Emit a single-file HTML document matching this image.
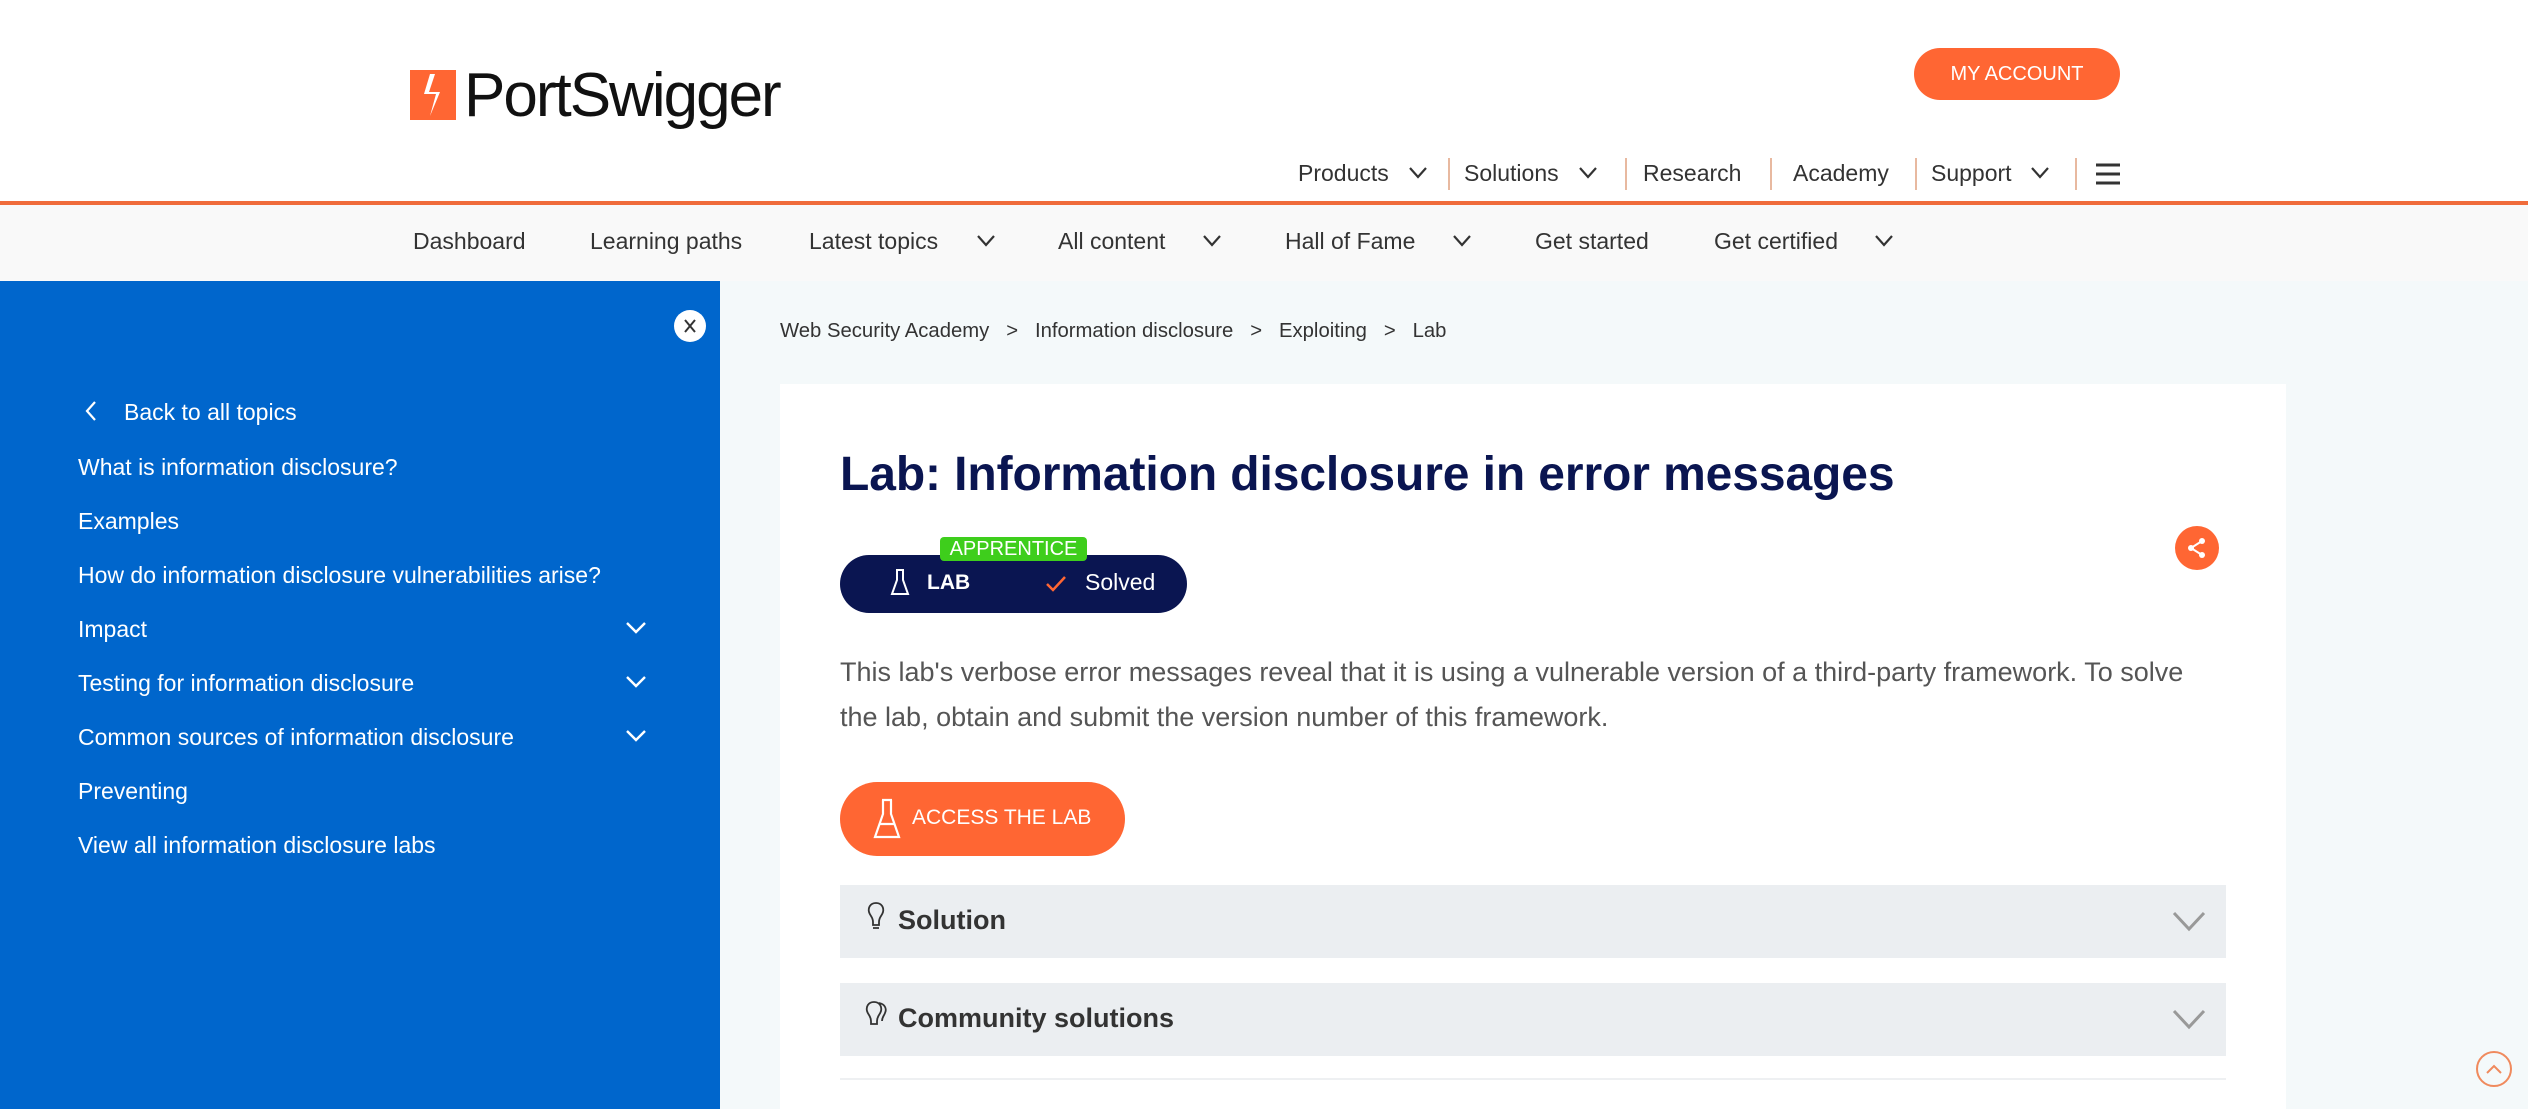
<!DOCTYPE html>
<html><head><meta charset="utf-8"><style>
*{margin:0;padding:0;box-sizing:border-box}
body{width:2528px;height:1109px;overflow:hidden;background:#fff;font-family:"Liberation Sans",Arial,sans-serif;position:relative}
.a{position:absolute;white-space:nowrap}
.nav{font-size:23px;color:#333;top:160px}
.sep{position:absolute;top:158px;width:2px;height:32px;background:#e8b9a0}
.sn{font-size:23px;color:#333;top:228px}
.side{font-size:23px;color:#fff}
.chev{position:absolute}
</style></head><body>
<div class="a" style="left:410px;top:70px;width:46px;height:50px;background:#ff6633"></div>
<svg class="a" style="left:410px;top:70px" width="46" height="50" viewBox="0 0 46 50"><path d="M20 4 L14 24 L26 24 L20 46 L30 22 L19 22 L25 4 Z" fill="#fff"/></svg>
<div class="a" style="left:464px;top:60px;font-size:62px;color:#111;letter-spacing:-2px;font-weight:500">PortSwigger</div>
<div class="a" style="left:1914px;top:48px;width:206px;height:52px;border-radius:26px;background:#ff6633;color:#fff;font-size:20px;line-height:52px;text-align:center">MY ACCOUNT</div>
<div class="a nav" style="left:1298px">Products</div>
<svg class="chev" style="left:1408px;top:166px" width="20" height="14"><path d="M2 2 L10 11 L18 2" stroke="#333" stroke-width="2.2" fill="none"/></svg>
<div class="sep" style="left:1448px"></div>
<div class="a nav" style="left:1464px">Solutions</div>
<svg class="chev" style="left:1578px;top:166px" width="20" height="14"><path d="M2 2 L10 11 L18 2" stroke="#333" stroke-width="2.2" fill="none"/></svg>
<div class="sep" style="left:1625px"></div>
<div class="a nav" style="left:1643px">Research</div>
<div class="sep" style="left:1770px"></div>
<div class="a nav" style="left:1793px">Academy</div>
<div class="sep" style="left:1915px"></div>
<div class="a nav" style="left:1931px">Support</div>
<svg class="chev" style="left:2030px;top:166px" width="20" height="14"><path d="M2 2 L10 11 L18 2" stroke="#333" stroke-width="2.2" fill="none"/></svg>
<div class="sep" style="left:2075px"></div>
<svg class="a" style="left:2096px;top:163px" width="24" height="22"><path d="M0 2H24M0 11H24M0 20H24" stroke="#333" stroke-width="3"/></svg>
<div class="a" style="left:0;top:201px;width:2528px;height:4px;background:#f06c3b"></div>
<div class="a" style="left:0;top:205px;width:2528px;height:76px;background:#f9f9f9"></div>
<div class="a sn" style="left:413px">Dashboard</div>
<div class="a sn" style="left:590px">Learning paths</div>
<div class="a sn" style="left:809px">Latest topics</div>
<svg class="chev" style="left:976px;top:234px" width="20" height="14"><path d="M2 2 L10 11 L18 2" stroke="#333" stroke-width="2.2" fill="none"/></svg>
<div class="a sn" style="left:1058px">All content</div>
<svg class="chev" style="left:1202px;top:234px" width="20" height="14"><path d="M2 2 L10 11 L18 2" stroke="#333" stroke-width="2.2" fill="none"/></svg>
<div class="a sn" style="left:1285px">Hall of Fame</div>
<svg class="chev" style="left:1452px;top:234px" width="20" height="14"><path d="M2 2 L10 11 L18 2" stroke="#333" stroke-width="2.2" fill="none"/></svg>
<div class="a sn" style="left:1535px">Get started</div>
<div class="a sn" style="left:1714px">Get certified</div>
<svg class="chev" style="left:1874px;top:234px" width="20" height="14"><path d="M2 2 L10 11 L18 2" stroke="#333" stroke-width="2.2" fill="none"/></svg>
<div class="a" style="left:0;top:281px;width:720px;height:828px;background:#0066cc"></div>
<div class="a" style="left:720px;top:281px;width:1808px;height:828px;background:#f4f9fa"></div>
<div class="a" style="left:674px;top:310px;width:32px;height:32px;border-radius:50%;background:#fff"></div>
<svg class="a" style="left:681px;top:317px" width="18" height="18"><path d="M4 3L14 15M14 3L4 15" stroke="#333" stroke-width="2"/></svg>
<svg class="a" style="left:84px;top:400px" width="14" height="22"><path d="M11 2L3 11L11 20" stroke="#fff" stroke-width="2.2" fill="none"/></svg>
<div class="a side" style="left:124px;top:399px">Back to all topics</div>
<div class="a side" style="left:78px;top:454px">What is information disclosure?</div>
<div class="a side" style="left:78px;top:508px">Examples</div>
<div class="a side" style="left:78px;top:562px">How do information disclosure vulnerabilities arise?</div>
<div class="a side" style="left:78px;top:616px">Impact</div>
<div class="a side" style="left:78px;top:670px">Testing for information disclosure</div>
<div class="a side" style="left:78px;top:724px">Common sources of information disclosure</div>
<div class="a side" style="left:78px;top:778px">Preventing</div>
<div class="a side" style="left:78px;top:832px">View all information disclosure labs</div>
<svg class="chev" style="left:625px;top:621px" width="22" height="14"><path d="M2 2 L11 11 L20 2" stroke="#fff" stroke-width="2.4" fill="none"/></svg>
<svg class="chev" style="left:625px;top:675px" width="22" height="14"><path d="M2 2 L11 11 L20 2" stroke="#fff" stroke-width="2.4" fill="none"/></svg>
<svg class="chev" style="left:625px;top:729px" width="22" height="14"><path d="M2 2 L11 11 L20 2" stroke="#fff" stroke-width="2.4" fill="none"/></svg>
<div class="a" style="left:780px;top:320px;font-size:20.3px;color:#333">Web Security Academy &nbsp;&nbsp;&gt;&nbsp;&nbsp; Information disclosure &nbsp;&nbsp;&gt;&nbsp;&nbsp; Exploiting &nbsp;&nbsp;&gt;&nbsp;&nbsp; Lab</div>
<div class="a" style="left:780px;top:384px;width:1506px;height:725px;background:#fff"></div>
<div class="a" style="left:840px;top:447px;font-size:48px;font-weight:bold;color:#0a1551;letter-spacing:-0.1px">Lab: Information disclosure in error messages</div>
<div class="a" style="left:840px;top:555px;width:347px;height:58px;border-radius:29px;background:#0a1551"></div>
<div class="a" style="left:940px;top:537px;width:147px;height:24px;border-radius:4px;background:#3ece1c;color:#fff;font-size:20px;line-height:24px;text-align:center">APPRENTICE</div>
<svg class="a" style="left:889px;top:568px" width="22" height="30"><path d="M7 2H15M8 2V12L3 26H19L14 12V2" stroke="#fff" stroke-width="2" fill="none"/></svg>
<div class="a" style="left:927px;top:571px;font-size:21px;font-weight:bold;color:#fff">LAB</div>
<svg class="a" style="left:1044px;top:574px" width="24" height="20"><path d="M3 10L9 16L21 3" stroke="#ff6633" stroke-width="2.5" fill="none"/></svg>
<div class="a" style="left:1085px;top:569px;font-size:23px;color:#fff">Solved</div>
<div class="a" style="left:2175px;top:526px;width:44px;height:44px;border-radius:50%;background:#ff6633"></div>
<svg class="a" style="left:2185px;top:536px" width="24" height="24"><circle cx="17" cy="5" r="3" fill="#fff"/><circle cx="6" cy="12" r="3" fill="#fff"/><circle cx="17" cy="19" r="3" fill="#fff"/><path d="M17 5L6 12L17 19" stroke="#fff" stroke-width="2" fill="none"/></svg>
<div class="a" style="left:840px;top:650px;font-size:27px;line-height:45px;color:#555;white-space:normal;width:1375px">This lab's verbose error messages reveal that it is using a vulnerable version of a third-party framework. To solve the lab, obtain and submit the version number of this framework.</div>
<div class="a" style="left:840px;top:782px;width:285px;height:74px;border-radius:37px;background:#ff6633"></div>
<svg class="a" style="left:872px;top:798px" width="30" height="42"><path d="M10 2H20M11 2V16L3 39H27L19 16V2M8 26H22" stroke="#fff" stroke-width="2.2" fill="none"/></svg>
<div class="a" style="left:912px;top:806px;font-size:21px;color:#fff">ACCESS THE LAB</div>
<div class="a" style="left:840px;top:885px;width:1386px;height:73px;background:#ebeef1"></div>
<svg class="a" style="left:866px;top:901px" width="20" height="30"><path d="M10 2C4 2 2 7 3 11C4 15 7 16 7 21V24H13V21C13 16 16 15 17 11C18 7 16 2 10 2ZM7 27H13" stroke="#333" stroke-width="1.8" fill="none"/></svg>
<div class="a" style="left:898px;top:905px;font-size:27px;font-weight:bold;color:#333">Solution</div>
<svg class="a" style="left:2172px;top:910px" width="34" height="22"><path d="M2 3L17 19L32 3" stroke="#999" stroke-width="3" fill="none"/></svg>
<div class="a" style="left:840px;top:983px;width:1386px;height:73px;background:#ebeef1"></div>
<svg class="a" style="left:864px;top:1000px" width="26" height="30"><path d="M10 2C4 2 2 7 3 11C4 15 7 16 7 21V24H13V21C13 16 16 15 17 11C18 7 16 2 10 2ZM15 3C21 4 23 9 21 13C20 16 18 17 18 21" stroke="#333" stroke-width="1.8" fill="none"/></svg>
<div class="a" style="left:898px;top:1003px;font-size:27px;font-weight:bold;color:#333">Community solutions</div>
<svg class="a" style="left:2172px;top:1008px" width="34" height="22"><path d="M2 3L17 19L32 3" stroke="#999" stroke-width="3" fill="none"/></svg>
<div class="a" style="left:840px;top:1078px;width:1386px;height:2px;background:#eef0f2"></div>
<div class="a" style="left:2476px;top:1051px;width:36px;height:36px;border-radius:50%;border:2px solid #f08a5d"></div>
<svg class="a" style="left:2482px;top:1057px" width="24" height="24"><path d="M5 16L12 9L19 16" stroke="#f08a5d" stroke-width="2" fill="none"/></svg>
</body></html>
